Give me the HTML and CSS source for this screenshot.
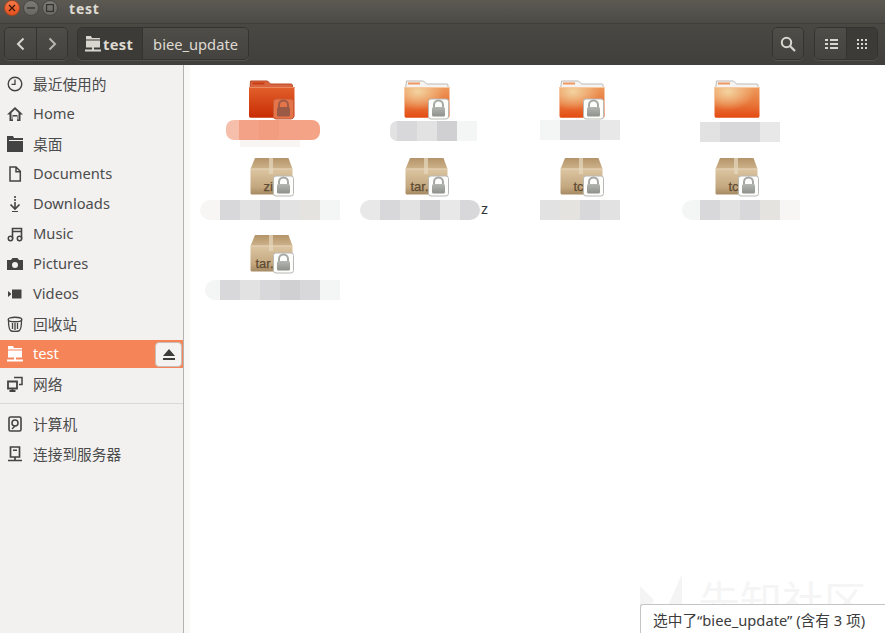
FILE: index.html
```html
<!DOCTYPE html>
<html lang="zh">
<head>
<meta charset="utf-8">
<title>test</title>
<link rel="stylesheet" href="styles.css">
</head>
<body>
<svg class="defs" width="0" height="0" aria-hidden="true">
  <defs>
    <linearGradient id="fFront" x1="0" y1="0" x2="0" y2="1"><stop offset="0" stop-color="#ee9a5c"/><stop offset=".55" stop-color="#e8763a"/><stop offset="1" stop-color="#e34a12"/></linearGradient>
    <radialGradient id="fGlow" cx=".3" cy=".15" r=".6"><stop offset="0" stop-color="#f3d3a0"/><stop offset="1" stop-color="#f2cf9a" stop-opacity="0"/></radialGradient>
    <linearGradient id="sFront" x1="0" y1="0" x2="0" y2="1"><stop offset="0" stop-color="#e2602c"/><stop offset="1" stop-color="#c82c02"/></linearGradient>
    <linearGradient id="boxBody" x1="0" y1="0" x2="0" y2="1"><stop offset="0" stop-color="#dcc6a2"/><stop offset=".7" stop-color="#c4a880"/><stop offset="1" stop-color="#a58a63"/></linearGradient>
    <linearGradient id="boxLid" x1="0" y1="0" x2="0" y2="1"><stop offset="0" stop-color="#b4946a"/><stop offset="1" stop-color="#cdb28a"/></linearGradient>
    <linearGradient id="lockG" x1="0" y1="0" x2="0" y2="1"><stop offset="0" stop-color="#b4b6b2"/><stop offset="1" stop-color="#8e908c"/></linearGradient>

    <symbol id="folder" viewBox="0 0 48 44">
      <path d="M3.500 5h17l3 3h20.500q1 0 1 1v5h-42.500z" fill="#f5f4f2" stroke="#bcb9b4"/>
      <rect x="5" y="6.500" width="12" height="2" fill="#f0965e"/>
      <path d="M1.500 11h45v29q0 1.800-1.500 1.800h-42q-1.500 0-1.500-1.800z" fill="url(#fFront)"/>
      <path d="M1.500 11h45v29q0 1.800-1.500 1.800h-42q-1.500 0-1.500-1.800z" fill="url(#fGlow)"/>
      <rect x="1.500" y="11" width="45" height="1" fill="#f7c9a0"/>
    </symbol>
    <symbol id="folderSel" viewBox="0 0 48 44">
      <path d="M2.500 5h17l3 3h20.500q1.500 0 1.500 1.500v5h-42.500z" fill="#d9653f" stroke="#b84a26"/>
      <rect x="4.500" y="6.500" width="12" height="2" fill="#c93d14"/>
      <path d="M1 11h45.500v29q0 1.800-1.500 1.800h-42.500q-1.500 0-1.500-1.800z" fill="url(#sFront)"/>
      <rect x="1" y="11" width="45.500" height="1" fill="#ec8a5f"/>
    </symbol>
    <symbol id="box" viewBox="0 0 48 44">
      <path d="M7 5h33.500l4 11h-42z" fill="url(#boxLid)"/>
      <rect x="2.500" y="15.500" width="42" height="26" rx="1.500" fill="url(#boxBody)"/>
      <rect x="2.500" y="15.500" width="42" height="1" fill="#e3d2b6"/>
      <rect x="21" y="5" width="4" height="16" fill="#e4d5bc" opacity=".75"/>
    </symbol>
    <symbol id="lock" viewBox="0 0 48 44">
      <rect x="25.500" y="23" width="20" height="20" rx="2.500" fill="#fdfdfc" stroke="#b8b8b4"/>
      <path d="M31 32v-3a4.500 4.500 0 0 1 9 0v3" fill="none" stroke="#a6a8a4" stroke-width="2"/>
      <rect x="29" y="31" width="13" height="9.500" rx="1.500" fill="url(#lockG)"/>
    </symbol>
    <symbol id="lockSel" viewBox="0 0 48 44">
      <rect x="25.500" y="23" width="20" height="20" rx="2.500" fill="#e4744a" stroke="#c95a34"/>
      <path d="M31 32v-3a4.500 4.500 0 0 1 9 0v3" fill="none" stroke="#9e5a44" stroke-width="2"/>
      <rect x="29" y="31" width="13" height="9.500" rx="1.500" fill="#9a5a46"/>
    </symbol>
    <symbol id="netfolder" viewBox="0 0 16 16">
      <path d="M1 0h5l1 2h8v1.500h-14zM1 4.500h14v7h-6v2h7v2h-16v-2h7v-2h-6z" fill="currentColor"/>
    </symbol>
  </defs>
</svg>

<div class="window">
  <header class="titlebar">
    <span class="wbtn close"><svg viewBox="0 0 8 8" class="wglyph"><path d="M1 1l6 6M7 1l-6 6" stroke="#3a1408" stroke-width="1.200"/></svg></span>
    <span class="wbtn"><svg viewBox="0 0 8 8" class="wglyph"><path d="M0 4h8" stroke="#35332f" stroke-width="1.400"/></svg></span>
    <span class="wbtn"><svg viewBox="0 0 8 8" class="wglyph"><rect x=".6" y=".6" width="6.800" height="6.800" fill="none" stroke="#35332f" stroke-width="1.200"/></svg></span>
    <span class="wtitle">test</span>
  </header>

  <div class="toolbar">
    <div class="group">
      <button class="tbtn nav"><svg viewBox="0 0 16 16" class="ticon"><path d="M10.500 2.500l-5.500 5.500 5.500 5.500" fill="none" stroke="#d9d6d0" stroke-width="2"/></svg></button>
      <button class="tbtn nav"><svg viewBox="0 0 16 16" class="ticon"><path d="M5.500 2.500l5.500 5.500-5.500 5.500" fill="none" stroke="#b8b5ae" stroke-width="2"/></svg></button>
    </div>
    <div class="group path">
      <button class="tbtn crumb active">
        <svg class="ticon light"><use href="#netfolder"/></svg>
        <b>test</b>
      </button>
      <button class="tbtn crumb">biee_update</button>
    </div>
    <div class="spacer"></div>
    <div class="group">
      <button class="tbtn tool"><svg viewBox="0 0 16 16" class="ticon"><circle cx="6.500" cy="6.500" r="4.700" fill="none" stroke="#d9d6d0" stroke-width="2"/><path d="M10 10l5 5" stroke="#d9d6d0" stroke-width="2.200"/></svg></button>
    </div>
    <div class="group views">
      <button class="tbtn nav"><svg viewBox="0 0 16 16" class="ticon"><path d="M2 3h3v2h-3zM7 3h8v2h-8zM2 7h3v2h-3zM7 7h8v2h-8zM2 11h3v2h-3zM7 11h8v2h-8z" fill="#d9d6d0"/></svg></button>
      <button class="tbtn nav active"><svg viewBox="0 0 16 16" class="ticon"><path d="M3 3h2v2h-2zM7 3h2v2h-2zM11 3h2v2h-2zM3 7h2v2h-2zM7 7h2v2h-2zM11 7h2v2h-2zM3 11h2v2h-2zM7 11h2v2h-2zM11 11h2v2h-2z" fill="#d9d6d0"/></svg></button>
    </div>
  </div>

  <div class="body">
    <nav class="sidebar">
      <a class="row"><svg viewBox="0 0 16 16" class="sicon"><circle cx="8" cy="8" r="6.800" fill="none" stroke="currentColor" stroke-width="1.400"/><path d="M8 3.500v4.800h-3.500" fill="none" stroke="currentColor" stroke-width="1.300"/></svg>最近使用的</a>
      <a class="row"><svg viewBox="0 0 16 16" class="sicon"><path d="M8 1l8 7.500h-2.500v6.500h-3.500v-4.500h-4v4.500h-3.500v-6.500h-2.500zM8 3.500l-3.500 3.300v6.700h1v-4.500h5v4.500h1v-6.700z" fill="currentColor" fill-rule="evenodd"/></svg>Home</a>
      <a class="row"><svg viewBox="0 0 16 16" class="sicon"><path d="M0 0h6l1 2h9v2h-14v1h14v11h-16z" fill="currentColor"/></svg>桌面</a>
      <a class="row"><svg viewBox="0 0 16 16" class="sicon"><path d="M3 1h6l4.300 4.300v9.700h-10.300zM9 1.500v4.300h4" fill="none" stroke="currentColor" stroke-width="1.500"/></svg>Documents</a>
      <a class="row"><svg viewBox="0 0 16 16" class="sicon"><path d="M7.200 0h1.600v2h-1.600zM7.200 3h1.600v2h-1.600zM7.200 6h1.600v6h-1.600zM5 15h6v1h-6z" fill="currentColor"/><path d="M3.500 8.500l4.500 4.500 4.500-4.500" fill="none" stroke="currentColor" stroke-width="1.700"/></svg>Downloads</a>
      <a class="row"><svg viewBox="0 0 16 16" class="sicon"><path d="M5.500 12.500v-10h9v10M5.500 5.500h9" fill="none" stroke="currentColor" stroke-width="1.600"/><circle cx="3.500" cy="12.500" r="2.200" fill="none" stroke="currentColor" stroke-width="1.500"/><circle cx="12.500" cy="12.500" r="2.200" fill="none" stroke="currentColor" stroke-width="1.500"/></svg>Music</a>
      <a class="row"><svg viewBox="0 0 16 16" class="sicon"><path d="M0 4h4l1.500-2h5l1.500 2h4v10h-16zM8 6a3 3 0 1 0 0 6 3 3 0 0 0 0-6z" fill="currentColor" fill-rule="evenodd"/></svg>Pictures</a>
      <a class="row"><svg viewBox="0 0 16 16" class="sicon"><path d="M5 3.500h9.500v9h-9.500zM1 5l3 2.500v1l-3 2.500z" fill="currentColor"/></svg>Videos</a>
      <a class="row"><svg viewBox="0 0 16 16" class="sicon"><ellipse cx="8" cy="3.500" rx="6.800" ry="2.200" fill="none" stroke="currentColor" stroke-width="1.400"/><path d="M1.500 4c0 5 .5 9 2 10.500q1 1 4.500 1t4.500-1c1.500-1.500 2-5.500 2-10.500M5.500 7v6M8 7v7M10.500 7v6" fill="none" stroke="currentColor" stroke-width="1.300"/></svg>回收站</a>
      <a class="row selected"><svg class="sicon"><use href="#netfolder"/></svg>test<button class="eject"><svg viewBox="0 0 14 12" class="ejecticon"><path d="M7 0l6 7h-12zM1 9h12v2h-12z" fill="#3c3c3c"/></svg></button></a>
      <a class="row"><svg viewBox="0 0 16 16" class="sicon"><path d="M1 5.500h9v7h-9zM2.500 15h6M5.500 12v3" fill="none" stroke="currentColor" stroke-width="1.800"/><path d="M7 1.500h8v7h-3" fill="none" stroke="currentColor" stroke-width="1.500"/></svg>网络</a>
      <div class="sep"></div>
      <a class="row"><svg viewBox="0 0 16 16" class="sicon"><rect x="2" y="1" width="12" height="14" rx="1.500" fill="none" stroke="currentColor" stroke-width="1.600"/><circle cx="8" cy="7" r="3" fill="none" stroke="currentColor" stroke-width="1.500"/><path d="M5 13l3-3" stroke="currentColor" stroke-width="1.400"/></svg>计算机</a>
      <a class="row"><svg viewBox="0 0 16 16" class="sicon"><path d="M3.500 1h9v10h-9zM8 11v3M1 14.500h14" fill="none" stroke="currentColor" stroke-width="1.700"/><path d="M6 3.500h4v1.500h-4z" fill="currentColor"/></svg>连接到服务器</a>
    </nav>

    <main class="main">
      <div class="grid">
        <div class="cell">
          <svg class="ficon"><use href="#folderSel"/><use href="#lockSel"/></svg>
          <div class="label l1 orange"><i class="w13 o1"></i><i class="o2"></i><i class="o3"></i><i class="o2"></i><i class="w21 o4"></i></div>
        </div>
        <div class="cell">
          <svg class="ficon"><use href="#folder"/><use href="#lock"/></svg>
          <div class="label l2 round-l"><i class="w7 g2"></i><i class="g3"></i><i class="g2"></i><i class="g4"></i><i class="g1"></i></div>
        </div>
        <div class="cell">
          <svg class="ficon"><use href="#folder"/><use href="#lock"/></svg>
          <div class="label l3"><i class="g1"></i><i class="g3"></i><i class="g3"></i><i class="g5"></i></div>
        </div>
        <div class="cell">
          <svg class="ficon"><use href="#folder"/></svg>
          <div class="label l4 up2"><i class="g2"></i><i class="g3"></i><i class="g3"></i><i class="g5"></i></div>
        </div>
        <div class="cell">
          <svg class="ficon"><use href="#box"/><text x="15.500" y="38" class="boxtext">zi</text><use href="#lock"/></svg>
          <div class="label l5 down round-l"><i class="g0"></i><i class="g3"></i><i class="g2"></i><i class="g4"></i><i class="g2"></i><i class="g6"></i><i class="g1"></i></div>
        </div>
        <div class="cell">
          <svg class="ficon"><use href="#box"/><text x="7.500" y="38" class="boxtext">tar.</text><use href="#lock"/></svg>
          <div class="label l6 down round-l"><i class="g5"></i><i class="g3"></i><i class="g2"></i><i class="g4"></i><i class="g5"></i><i class="g3 round-r"></i><span class="tail">z</span></div>
        </div>
        <div class="cell">
          <svg class="ficon"><use href="#box"/><text x="15.500" y="38" class="boxtext">tc</text><use href="#lock"/></svg>
          <div class="label l3 down"><i class="g2"></i><i class="g6"></i><i class="g3"></i><i class="g2"></i></div>
        </div>
        <div class="cell">
          <svg class="ficon"><use href="#box"/><text x="15.500" y="38" class="boxtext">tc</text><use href="#lock"/></svg>
          <div class="label l7 down round-l"><i class="w18 g1"></i><i class="g3"></i><i class="g2"></i><i class="g3"></i><i class="g6"></i><i class="g0"></i></div>
        </div>
        <div class="cell">
          <svg class="ficon"><use href="#box"/><text x="7.500" y="38" class="boxtext">tar.</text><use href="#lock"/></svg>
          <div class="label l2b down6 round-l"><i class="w15 g1"></i><i class="g3"></i><i class="g2"></i><i class="g3"></i><i class="g4"></i><i class="g3"></i><i class="g1"></i></div>
        </div>
      </div>
    </main>
  </div>

  <div class="watermark">
    <svg viewBox="0 0 44 50" class="wmlogo"><path d="M0 12l14 14-14 24zM42 0v50h-22z" fill="#f4f4f4"/></svg>
    <span>先知社区</span>
  </div>
  <div class="status">选中了“biee_update” (含有 3 项)</div>
</div>
</body>
</html>
```
FILE: styles.css
```css
* { box-sizing: border-box; }
html, body { margin: 0; padding: 0; }
body {
  width: 885px;
  height: 633px;
  overflow: hidden;
  background: #fff;
  font-family: "Noto Sans", "Noto Sans CJK SC", sans-serif;
  font-size: 14.7px;
  color: #4c4c4c;
}
.defs { position: absolute; }
.window { position: relative; width: 885px; height: 633px; display: flex; flex-direction: column; overflow: hidden; }

.titlebar {
  height: 24px;
  flex: none;
  display: flex;
  align-items: flex-start;
  gap: 3px;
  padding: 0 0 0 4px;
  background: linear-gradient(#5c5953, #4d4b46);
  border-bottom: 1px solid #3f3d39;
}
.wbtn {
  width: 16px;
  height: 16px;
  border-radius: 50%;
  flex: none;
  display: flex;
  align-items: center;
  justify-content: center;
  background: linear-gradient(#7c7a74, #6a6863);
  border: 1px solid #4a4843;
}
.close { background: linear-gradient(#f37a4a, #e2511f); border-color: #a8441f; }
.wglyph { width: 8px; height: 8px; }
.wtitle {
  margin-left: 8px;
  font-size: 14px;
  font-weight: 700;
  letter-spacing: .8px;
  color: #dfdbd2;
  line-height: 17px;
}

.toolbar {
  height: 41px;
  flex: none;
  display: flex;
  align-items: flex-start;
  padding: 3px 7px 0 4px;
  background: linear-gradient(#4a4843, #413f3b);
}
.spacer { flex: 1; }
.group {
  height: 33px;
  display: flex;
  border: 1px solid #35332f;
  border-radius: 5px;
  overflow: hidden;
  box-shadow: 0 1px 0 #55534e;
}
.path { margin-left: 9px; }
.views { margin-left: 10px; }
.tbtn {
  height: 100%;
  padding: 0;
  border: 0;
  font: inherit;
  color: #dfdbd2;
  display: flex;
  align-items: center;
  justify-content: center;
  gap: 2px;
  background: linear-gradient(#4f4d48, #45433f);
}
.tbtn + .tbtn { border-left: 1px solid #35332f; }
.tbtn.active { background: #3d3b37; }
.nav { width: 31px; }
.tool { width: 30px; }
.ticon { width: 16px; height: 16px; flex: none; }
.light { color: #d9d6d0; }
.crumb { padding: 0 10px; }
.crumb.active { padding: 0 9px 0 7px; }
.crumb b { font-weight: 700; font-size: 14.7px; letter-spacing: .3px; }

.body { flex: 1; display: flex; min-height: 0; }
.sidebar {
  width: 184px;
  flex: none;
  padding-top: 5px;
  background: #f2f1f0;
  border-right: 1px solid #b4b3b0;
  display: flex;
  flex-direction: column;
  gap: 2px;
}
.row {
  position: relative;
  height: 28px;
  flex: none;
  display: flex;
  align-items: center;
  gap: 10px;
  padding: 0 0 2px 7px;
  color: #4c4c4c;
}
.sicon { width: 16px; height: 16px; flex: none; margin-top: 2px; color: #434343; }
.selected { background: #f58558; color: #fff; }
.selected .sicon { color: #fff; }
.eject {
  position: absolute;
  right: 1px;
  top: 2px;
  width: 27px;
  height: 25px;
  padding: 0;
  border: 1px solid #c9bdb4;
  border-radius: 4px;
  background: #f4f3f2;
  display: flex;
  align-items: center;
  justify-content: center;
}
.ejecticon { width: 14px; height: 12px; }
.sep { height: 1px; margin: 3px 0 4px; background: #dad9d7; flex: none; }

.main { flex: 1; border-left: 6px solid #f8f8f7; padding: 11px 0 0 5px; background: #fff; min-width: 0; }
.grid { display: grid; grid-template-columns: repeat(4, 155px); grid-auto-rows: 77px; }
.cell { display: flex; flex-direction: column; align-items: flex-start; }
.ficon { width: 48px; height: 44px; margin-left: 53px; flex: none; overflow: visible; }
.boxtext { font-family: "Liberation Sans", sans-serif; font-size: 13px; fill: #5e4b33; stroke: #5e4b33; stroke-width: .25px; }

.label { position: relative; display: flex; height: 20px; flex: none; }
.label i { display: block; flex: 0 0 20px; height: 100%; }
.round-l i:first-child { border-radius: 10px 0 0 10px; }
.round-r { border-radius: 0 10px 10px 0; }
.orange i:first-child { border-radius: 8px 0 0 8px; }
.orange i:last-child { border-radius: 0 8px 8px 0; }
.orange::after {
  content: "";
  position: absolute;
  left: 14px;
  right: 20px;
  top: 20px;
  height: 7px;
  background: #f9f5f2;
}
.w7 { flex-basis: 7px !important; }
.w13 { flex-basis: 13px !important; }
.w15 { flex-basis: 15px !important; }
.w18 { flex-basis: 18px !important; }
.w21 { flex-basis: 21px !important; }
.o1 { background: #f6bfab; }
.o2 { background: #f3a287; }
.o3 { background: #f29d80; }
.o4 { background: #f5a386; }
.g0 { background: #f7f6f5; }
.g1 { background: #f4f5f5; }
.g2 { background: #e2e2e3; }
.g3 { background: #d8d8da; }
.g4 { background: #d0d0d2; }
.g5 { background: #e8e8e9; }
.g6 { background: #e4e3e0; }
.l1 { margin-left: 31px; }
.l2 { margin-left: 40px; margin-top: 1px; }
.l3 { margin-left: 35px; }
.l4 { margin-left: 40px; }
.up2 { margin-top: 2px; }
.l5 { margin-left: 5px; }
.l6 { margin-left: 10px; }
.l7 { margin-left: 22px; }
.l2b { margin-left: 10px; }
.down { margin-top: 3px; }
.down6 { margin-top: 6px; }
.tail { margin-left: 1px; font-size: 14.7px; line-height: 16px; color: #2e3436; }

.watermark {
  position: absolute;
  left: 640px;
  top: 574px;
  display: flex;
  align-items: center;
  gap: 14px;
  font-family: "Noto Sans CJK SC", sans-serif;
  font-size: 42px;
  line-height: 50px;
  color: #f5f5f5;
  white-space: nowrap;
}
.wmlogo { width: 44px; height: 50px; }
.status {
  position: absolute;
  left: 640px;
  top: 604px;
  width: 245px;
  height: 29px;
  padding: 5px 0 0 12px;
  background: #fff;
  border: 1px solid #c4c4c2;
  border-width: 1px 0 0 1px;
  border-radius: 3px 0 0 0;
  line-height: 20px;
  color: #3c3c3c;
  white-space: nowrap;
}
```
